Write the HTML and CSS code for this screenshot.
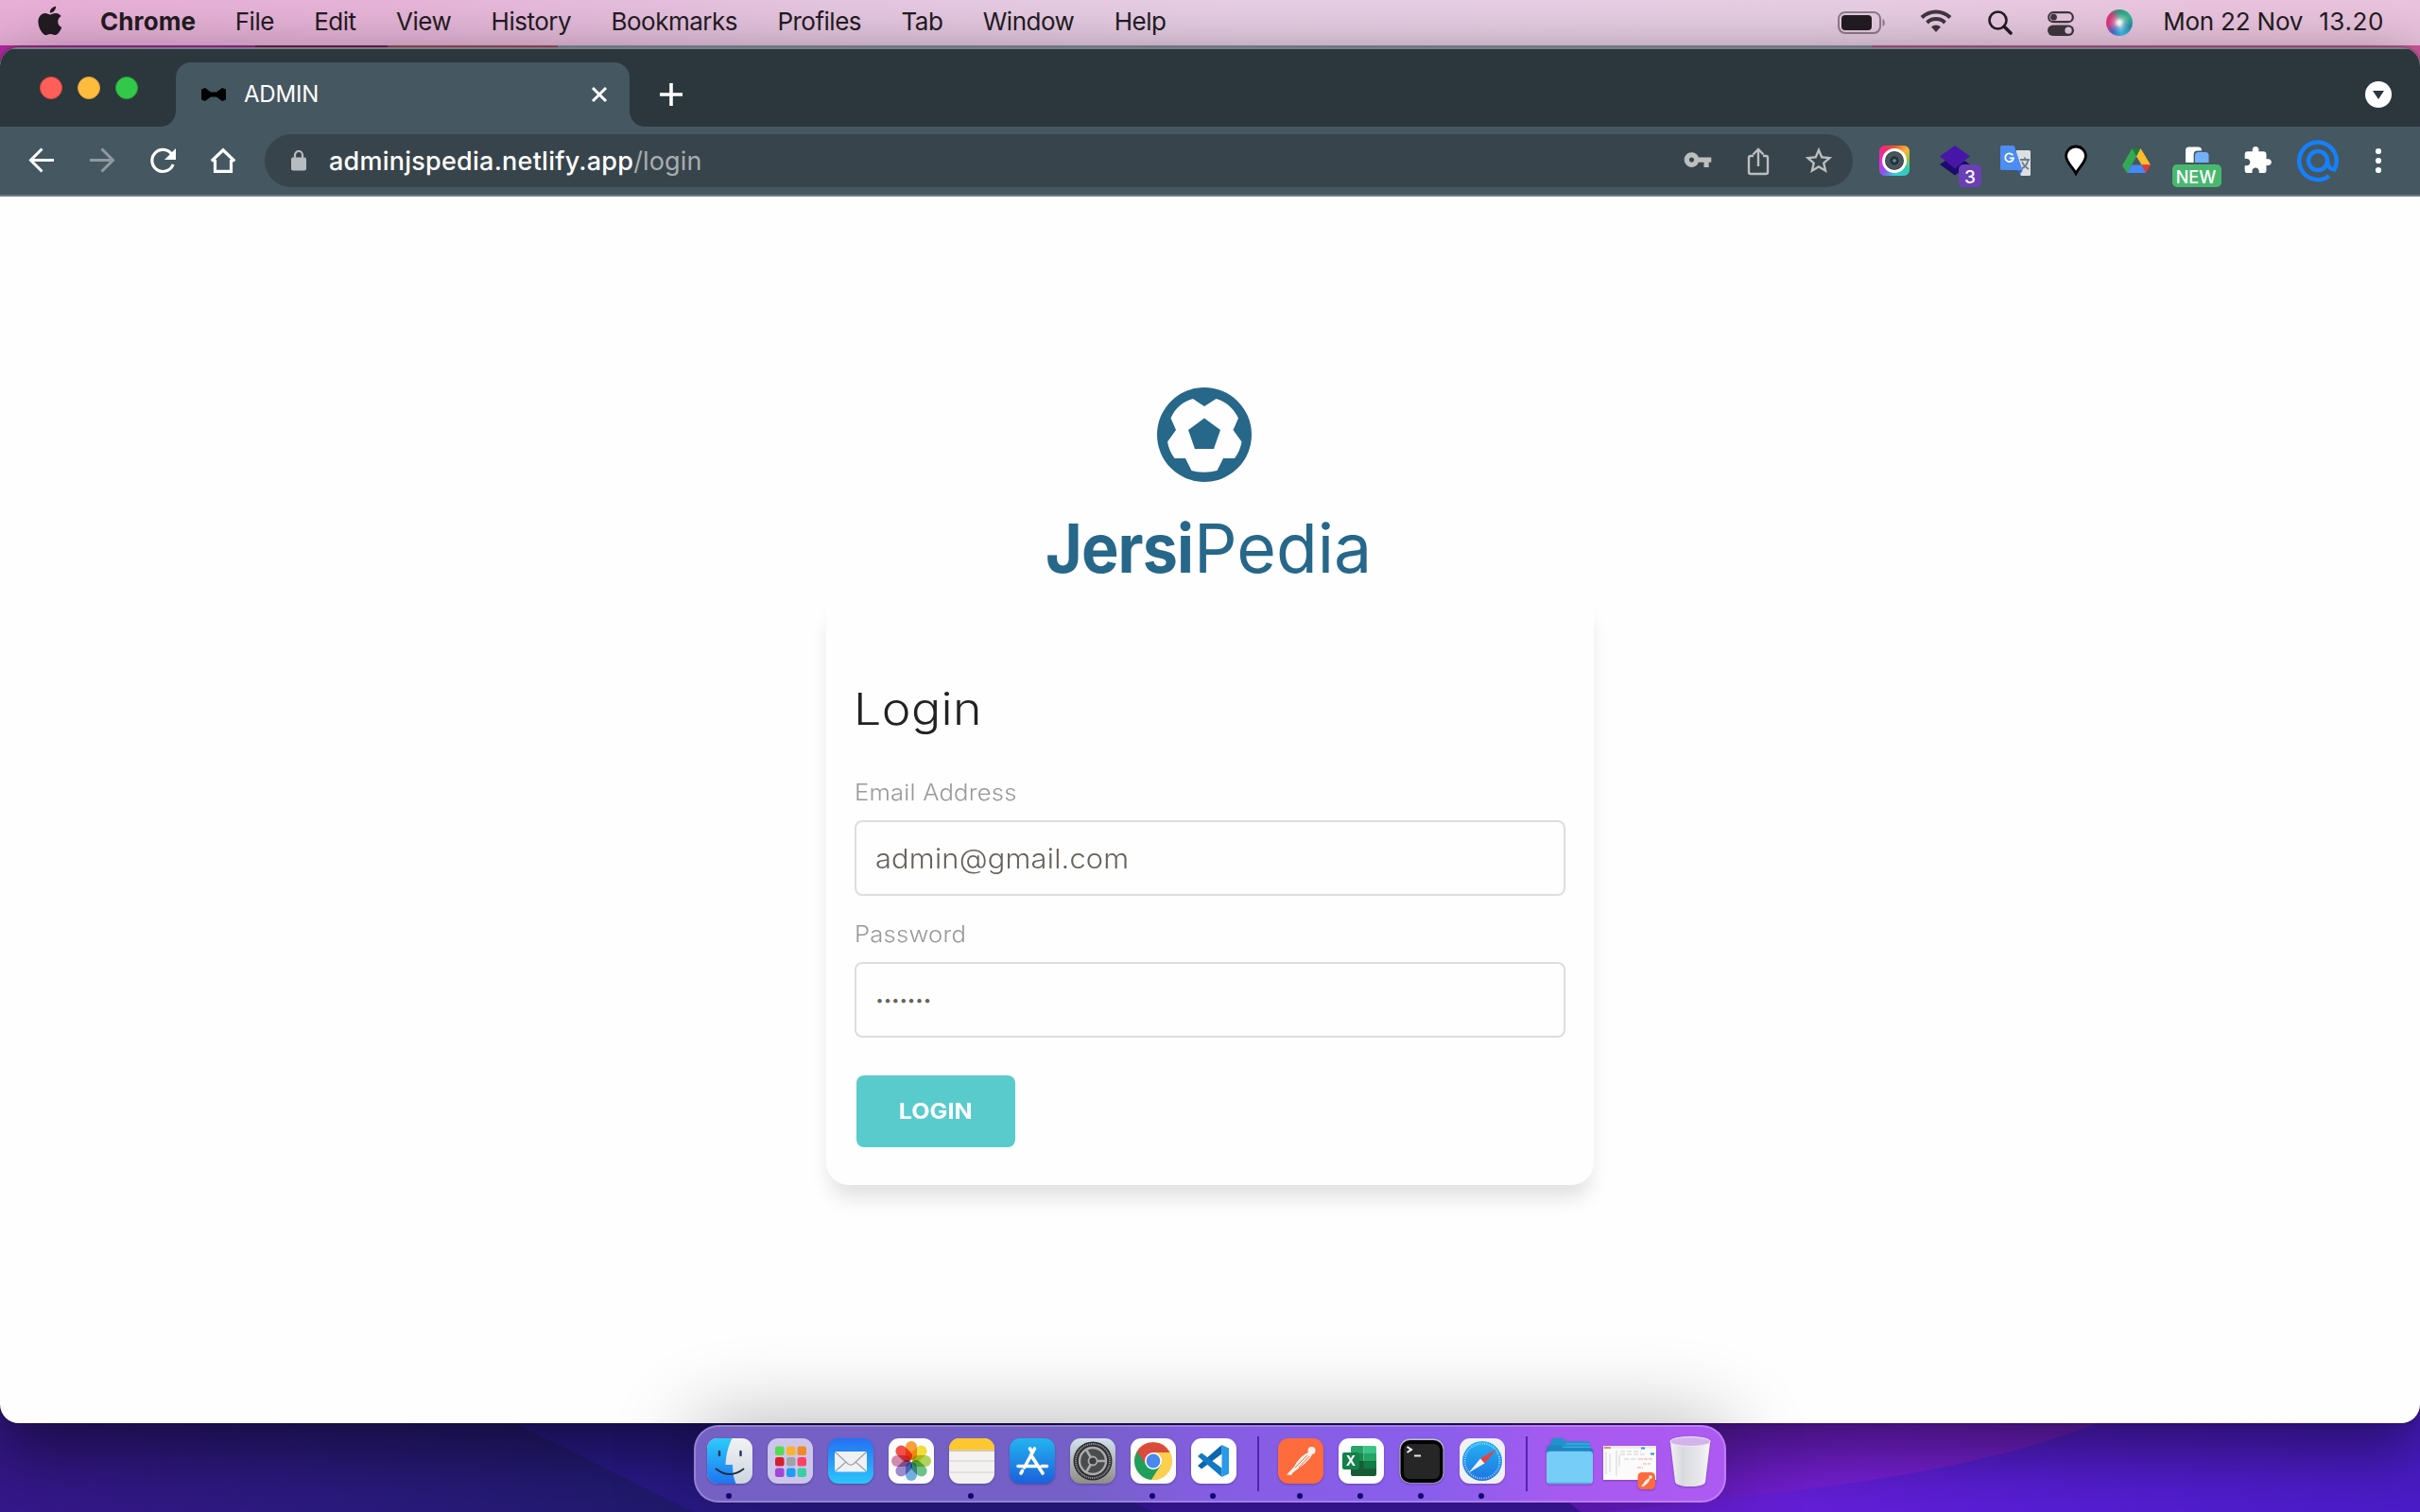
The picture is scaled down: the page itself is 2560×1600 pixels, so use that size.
FILE: index.html
```html
<!DOCTYPE html>
<html lang="en">
<head>
<meta charset="utf-8">
<title>ADMIN</title>
<link rel="stylesheet" href="styles.css">
</head>
<body>
<svg class="wallpaper" viewBox="0 0 2560 1600" aria-hidden="true">
  <defs>
    <linearGradient id="wBase" x1="0" x2="1"><stop offset="0" stop-color="#35178a"/><stop offset=".12" stop-color="#2c1a80"/><stop offset=".26" stop-color="#221a70"/></linearGradient>
    <linearGradient id="wMag" x1="0" x2="1"><stop offset="0" stop-color="#651bc4"/><stop offset=".4" stop-color="#7820d8"/><stop offset="1" stop-color="#6a1fb4"/></linearGradient>
    <linearGradient id="wBlue" x1="0" x2="1"><stop offset="0" stop-color="#7020dc"/><stop offset=".5" stop-color="#581ed6"/><stop offset="1" stop-color="#4a1cc8"/></linearGradient>
  </defs>
  <rect width="2560" height="1600" fill="url(#wBase)"/>
  <path d="M500 1484 L733 1600 H2560 V1484Z" fill="#2a1a8a"/>
  <path d="M1120 1550 L1220 1600 H2560 V1484 H1120Z" fill="#3c18a2"/>
  <path d="M1600 1540 L1672 1600 H2560 V1484 H1600Z" fill="url(#wMag)"/>
  <path d="M2270 1484 C2160 1536 2040 1562 1850 1583 L1700 1600 H2560 V1484Z" fill="url(#wBlue)"/>
  <rect width="1280" height="110" fill="#b92ba5"/>
  <rect x="270" width="140" height="60" fill="#84205f"/>
  <rect x="410" width="180" height="60" fill="#b85468"/>
  <rect x="590" width="1390" height="60" fill="#98a0b4"/>
  <rect x="1980" width="580" height="110" fill="#d35a9f"/>
</svg>

<header class="menubar">
  <svg class="apple" viewBox="0 0 26 32"><path d="M21.7 17c0-3 2.5-4.500 2.600-4.600-1.400-2.100-3.600-2.400-4.400-2.400-1.900-.2-3.600 1.100-4.600 1.100-.9 0-2.400-1.100-3.900-1.100-2 0-3.900 1.200-4.900 3-2.100 3.600-.5 9 1.500 12 1 1.400 2.200 3 3.700 3 1.500-.1 2.100-1 3.900-1s2.300 1 3.900.9c1.600 0 2.600-1.400 3.600-2.900 1.100-1.700 1.600-3.300 1.600-3.400 0 0-3-1.200-3-4.600zM18.700 8.100c.8-1 1.400-2.400 1.200-3.800-1.200.1-2.600.8-3.500 1.800-.8.900-1.400 2.300-1.200 3.600 1.300.1 2.700-.7 3.500-1.600z" transform="translate(-6.700 -4.900) scale(1.290)"/></svg>
  <nav class="menus">
    <span class="app">Chrome</span><span>File</span><span>Edit</span><span>View</span><span>History</span><span>Bookmarks</span><span>Profiles</span><span>Tab</span><span>Window</span><span>Help</span>
  </nav>
  <div class="status">
    <svg class="battery" viewBox="0 0 50 24"><rect x="1" y="1" width="44" height="22" rx="7" fill="none" stroke="#8f7d8d" stroke-width="2"/><rect x="4" y="4" width="32" height="16" rx="4"/><path d="M47.500 8v8c3-1 3-7 0-8z" fill="#8f7d8d"/></svg>
    <svg class="wifi" viewBox="0 0 34 26" fill="none" stroke="#40373f" stroke-width="4"><path d="M2 9.500a21.500 21.500 0 0 1 30 0"/><path d="M7.500 15a13.500 13.500 0 0 1 19 0"/><path d="M17 25l-5-5.500a7 7 0 0 1 10 0z" fill="#40373f" stroke="none"/></svg>
    <svg class="search" viewBox="0 0 26 26" fill="none" stroke="#231c22" stroke-width="2.600"><circle cx="10.500" cy="10.500" r="9"/><path d="M17 17l7 7" stroke-width="3.600" stroke-linecap="round"/></svg>
    <svg class="control" viewBox="0 0 28 26"><rect x="1.200" y="1.200" width="25.600" height="10" rx="5" fill="none" stroke="#40373f" stroke-width="2.200"/><circle cx="6.500" cy="6.200" r="3.400" fill="#40373f"/><rect y="14.500" width="28" height="11.500" rx="5.700" fill="#40373f"/><circle cx="22" cy="20.200" r="3.600" fill="#e9cbe2"/></svg>
    <span class="siri"></span>
    <span class="date">Mon 22 Nov</span><span class="clock">13.20</span>
  </div>
</header>

<main class="window">
  <div class="tabstrip">
    <div class="lights"><i class="close"></i><i class="min"></i><i class="max"></i></div>
    <div class="tab">
      <svg class="bow" viewBox="0 0 28 16"><path d="M1 2.500L5 1l6 4.500h6L23 1l4 1.500v11L23 15l-6-4.500h-6L5 15l-4-1.500z"/></svg>
      <span class="tab-title">ADMIN</span>
      <svg class="x" viewBox="0 0 18 18"><path d="M2 2l14 14M16 2L2 16" stroke="#fff" stroke-width="3"/></svg>
    </div>
    <svg class="plus" viewBox="0 0 24 24"><path d="M12 0v24M0 12h24" stroke="#fff" stroke-width="3.600"/></svg>
    <svg class="drop" viewBox="0 0 28 28"><circle cx="14" cy="14" r="14" fill="#fff"/><path d="M8 10h12l-6 9z" fill="#2c373d"/></svg>
  </div>

  <div class="toolbar">
    <svg class="cell" viewBox="0 0 64 64" fill="none" stroke="#fff" stroke-width="3"><path d="M45 31.500H21M32.500 19.500l-12 12 12 12"/></svg>
    <svg class="cell" viewBox="0 0 64 64" fill="none" stroke="#8f999f" stroke-width="3"><path d="M19 31.500h24M31.500 19.500l12 12-12 12"/></svg>
    <svg class="cell" viewBox="0 0 64 64"><path d="M41.500 25a11.500 11.500 0 1 0 1.600 11" fill="none" stroke="#fff" stroke-width="3.200"/><path d="M46 19v12H34z" fill="#fff"/></svg>
    <svg class="cell" viewBox="0 0 64 64"><path d="M19.800 32.500L32 20.800l12.200 11.700M23.500 31v12.300h17V31" fill="none" stroke="#fff" stroke-width="3.200"/></svg>
    <div class="omnibox">
      <svg class="lock" viewBox="0 0 16 22"><path d="M4 9V5a4 4 0 0 1 8 0v4" fill="none" stroke="#b6bcc0" stroke-width="2.200"/><rect y="7.500" width="16" height="14" rx="2" fill="#b6bcc0"/></svg>
      <div class="url"><span class="host">adminjspedia.netlify.app</span><span class="path">/login</span></div>
      <svg class="cell" viewBox="0 0 64 64" fill="#bcbebf"><path transform="translate(16.400 15.500) scale(1.300)" d="M12.650 10C11.830 7.670 9.610 6 7 6c-3.310 0-6 2.690-6 6s2.690 6 6 6c2.610 0 4.830-1.670 5.650-4H17v4h4v-4h2v-4H12.650zM7 14c-1.100 0-2-.9-2-2s.9-2 2-2 2 .9 2 2-.9 2-2 2z"/></svg>
      <svg class="cell" viewBox="0 0 64 64" fill="none" stroke="#bcbebf" stroke-width="2.400"><path d="M27 27h-3a2 2 0 0 0-2 2v15a2 2 0 0 0 2 2h16a2 2 0 0 0 2-2V29a2 2 0 0 0-2-2h-3M32 38V20.500M26.500 25.500L32 20l5.500 5.500"/></svg>
      <svg class="cell" viewBox="0 0 64 64" fill="#bcbebf"><path transform="translate(14.800 15) scale(1.430)" d="M22 9.240l-7.190-.62L12 2 9.190 8.630 2 9.240l5.460 4.730L5.820 21 12 17.270 18.180 21l-1.630-7.030L22 9.240zM12 15.400l-3.760 2.270 1-4.280-3.320-2.880 4.380-.38L12 6.100l1.710 4.040 4.380.38-3.320 2.880 1 4.280L12 15.400z"/></svg>
    </div>
    <div class="cell"><span class="lens"><i></i></span></div>
    <div class="cell">
      <svg viewBox="0 0 64 64"><path d="M16 36l6-4 10 8 10-8 6 4-16 11.500z" fill="#1d0a70"/><path d="M16 27.500L32 16l16 11.500L32 40z" fill="#4716a8"/></svg>
      <b class="badge three">3</b>
    </div>
    <svg class="cell" viewBox="0 0 64 64"><path d="M33 21h13.500q1.500 0 1.500 1.500v24q0 1.500-1.500 1.500H38l-5-10z" fill="#dcdfe1"/><path d="M37 31h10M42 28.500V31M45.500 31c-1 5-4 8-7 9.500M39 33c1.500 4 4 6 7 8" stroke="#6f7d86" stroke-width="1.800" fill="none"/><path d="M34 41.500h6l-3.500 6z" fill="#3a62c8"/><path d="M17.500 16H30l1 1 8.500 25H17.500q-1.500 0-1.500-1.500v-23q0-1.500 1.500-1.500z" fill="#4d8cf2"/><path d="M29.300 26.300a4.400 4.400 0 1 0 .7 3.100h-4.300" fill="none" stroke="#fff" stroke-width="1.800"/></svg>
    <svg class="cell" viewBox="0 0 64 64"><path d="M32 45.500c-3-6-10.400-12-10.400-18.500a10.400 10 0 0 1 20.800 0c0 6.500-7.400 12.500-10.400 18.500z" fill="#fff" stroke="#000" stroke-width="2.800"/></svg>
    <svg class="cell" viewBox="0 0 64 64"><path d="M27.500 19L17 37l5 8 10.500-18z" fill="#34a853"/><path d="M27.500 19h9L32 27.500z" fill="#188038"/><path d="M36.500 19L47 36.500H37.500L32 27.500z" fill="#fbbc2c"/><path d="M37.500 36.500H47l-5 8.500z" fill="#ea3535"/><path d="M27 36.500h10.500L42 45H22z" fill="#4688f4"/></svg>
    <div class="cell">
      <svg viewBox="0 0 64 64"><rect x="20" y="17.500" width="17" height="18" rx="3.500" fill="#fff"/><rect x="28.600" y="21.500" width="17" height="18" rx="4" fill="#455760"/><rect x="30" y="23" width="14.500" height="16" rx="3.500" fill="#74b0fa"/><rect x="16" y="34" width="32" height="8" fill="#455760"/></svg>
      <b class="badge new">NEW</b>
    </div>
    <svg class="cell" viewBox="0 0 64 64" fill="#fff"><path transform="translate(16 15.600) scale(1.340)" d="M20.500 11H19V7c0-1.100-.9-2-2-2h-4V3.500C13 2.120 11.880 1 10.500 1S8 2.120 8 3.500V5H4c-1.100 0-1.990.9-1.990 2v3.800H3.500c1.490 0 2.700 1.210 2.700 2.700s-1.210 2.700-2.700 2.700H2V20c0 1.100.9 2 2 2h3.800v-1.500c0-1.490 1.210-2.700 2.700-2.700 1.490 0 2.700 1.210 2.700 2.700V22H17c1.100 0 2-.9 2-2v-4h1.500c1.380 0 2.500-1.120 2.500-2.500S21.880 11 20.500 11z"/></svg>
    <svg class="cell" viewBox="0 0 64 64" fill="none" stroke="#1580fb" stroke-width="4.400"><circle cx="32" cy="32" r="10"/><path d="M43.800 48.200A19.800 19.800 0 1 1 51.800 32q0 5.500-2.600 9.500Q42 40 42 32"/></svg>
    <svg class="cell" viewBox="0 0 64 64" fill="#fff"><circle cx="32" cy="22" r="3.100"/><circle cx="32" cy="32" r="3.100"/><circle cx="32" cy="42" r="3.100"/></svg>
  </div>

  <section class="page">
    <svg class="ball" viewBox="0 0 100 100">
      <circle cx="50" cy="50" r="50" fill="#26678a"/>
      <path d="M38 12l12 8 12.500-8C73 15 81 22 86 32.500L80.500 45l9 12.500Q88 67 82 75H70l-6.500 13Q50 91.500 36.500 88L30 75H18.500Q12.500 67 11 57.500L20 45l-5.500-12.500C19 22 27 15 38 12z" fill="#fefefe"/>
      <path d="M50 32.500L67 45l-7 20H40l-7-20z" fill="#26678a"/>
    </svg>
    <div class="brand"><b>Jersi</b><span>Pedia</span></div>
    <form class="card">
      <h1>Login</h1>
      <label for="email">Email Address</label>
      <div class="field"><input id="email" type="text" value="admin@gmail.com"></div>
      <label for="pass">Password</label>
      <div class="field"><input id="pass" class="pass" type="text" value="•••••••"></div>
      <button type="button"><span>LOGIN</span></button>
    </form>
  </section>
</main>

<footer class="dock">
  <div class="slot running"><svg viewBox="0 0 48 48"><defs><linearGradient id="gF" x2="0" y2="1"><stop stop-color="#2ccbfa"/><stop offset="1" stop-color="#1e75f0"/></linearGradient><linearGradient id="gG" x2="0" y2="1"><stop stop-color="#f2f2f4"/><stop offset="1" stop-color="#ccd6e2"/></linearGradient></defs><rect width="48" height="48" rx="11" fill="url(#gG)"/><path d="M11 0h15.500C22 9 20 18 19.500 28H27c0 8 1 14 3.500 20H11A11 11 0 0 1 0 37V11A11 11 0 0 1 11 0z" fill="url(#gF)"/><path d="M13 14v4M35.500 14v4" stroke="#1d3b55" stroke-width="2.400" stroke-linecap="round"/><path d="M9.500 32.500q14.500 11 29 0" fill="none" stroke="#1d2a3a" stroke-width="1.800" stroke-linecap="round"/></svg></div>
  <div class="slot"><svg viewBox="0 0 48 48"><rect width="48" height="48" rx="11" fill="#cdc6ea"/><g><rect x="8" y="8.500" width="9.500" height="9.500" rx="2.500" fill="#52dc50"/><rect x="20" y="8.500" width="9.500" height="9.500" rx="2.500" fill="#f9b42e"/><rect x="31.500" y="8.500" width="9.500" height="9.500" rx="2.500" fill="#f08a24"/><rect x="8" y="20" width="9.500" height="9.500" rx="2.500" fill="#d3202c"/><rect x="20" y="20" width="9.500" height="9.500" rx="2.500" fill="#a0a2a8"/><rect x="31.500" y="20" width="9.500" height="9.500" rx="2.500" fill="#fb4265"/><rect x="8" y="31.500" width="9.500" height="9.500" rx="2.500" fill="#a146d6"/><rect x="20" y="31.500" width="9.500" height="9.500" rx="2.500" fill="#1f9cf4"/><rect x="31.500" y="31.500" width="9.500" height="9.500" rx="2.500" fill="#38cfa4"/></g></svg></div>
  <div class="slot"><svg viewBox="0 0 48 48"><defs><linearGradient id="gM" x2="0" y2="1"><stop stop-color="#2470f2"/><stop offset="1" stop-color="#2cc6fb"/></linearGradient></defs><rect width="48" height="48" rx="11" fill="url(#gM)"/><rect x="7" y="14" width="34" height="21.500" rx="2.500" fill="#f0f1f2"/><path d="M8 15l13 12q3 2.500 6 0l13-12M8 34.500l11-9.500M40 34.500L29 25" fill="none" stroke="#9da2a8" stroke-width="1.200"/></svg></div>
  <div class="slot"><svg viewBox="0 0 48 48"><rect width="48" height="48" rx="11" fill="#fdfcfd"/><g class="petals" transform="translate(24 24)"><rect x="-6" y="-21" width="12" height="20" rx="6" fill="#f9a13a"/><rect x="-6" y="-21" width="12" height="20" rx="6" fill="#f4de3a" transform="rotate(45)"/><rect x="-6" y="-21" width="12" height="20" rx="6" fill="#b2d65a" transform="rotate(90)"/><rect x="-6" y="-21" width="12" height="20" rx="6" fill="#70c488" transform="rotate(135)"/><rect x="-6" y="-21" width="12" height="20" rx="6" fill="#74b0e4" transform="rotate(180)"/><rect x="-6" y="-21" width="12" height="20" rx="6" fill="#9d8ccc" transform="rotate(225)"/><rect x="-6" y="-21" width="12" height="20" rx="6" fill="#d48cb0" transform="rotate(270)"/><rect x="-6" y="-21" width="12" height="20" rx="6" fill="#f4524a" transform="rotate(315)"/></g></svg></div>
  <div class="slot running"><svg viewBox="0 0 48 48"><rect width="48" height="48" rx="11" fill="#f3f2f0"/><path d="M0 12.500V11A11 11 0 0 1 11 0h26a11 11 0 0 1 11 11v1.500z" fill="#fdc72f"/><path d="M0 13.200h48" stroke="#b8b2a4" stroke-width="1"/><path d="M0 24h48M0 36h48" stroke="#d3d1cf" stroke-width="1"/></svg></div>
  <div class="slot"><svg viewBox="0 0 48 48"><defs><linearGradient id="gA" x2="0" y2="1"><stop stop-color="#22b4f0"/><stop offset="1" stop-color="#1c60dc"/></linearGradient></defs><rect width="48" height="48" rx="11" fill="url(#gA)"/><path d="M21.500 11l2.500 4M26.500 11L15.500 31M9 29.500h19M22.500 17.500L35 37M34 29.500h5.500M13.500 34.500l-1.500 2.500" fill="none" stroke="#fff" stroke-width="3.600" stroke-linecap="round"/></svg></div>
  <div class="slot"><svg viewBox="0 0 48 48"><defs><linearGradient id="gS" x2="0" y2="1"><stop stop-color="#d3e2ee"/><stop offset="1" stop-color="#8f8c88"/></linearGradient></defs><rect width="48" height="48" rx="11" fill="url(#gS)"/><circle cx="24" cy="24" r="20.500" fill="#2b2c2d"/><circle cx="24" cy="24" r="18" fill="none" stroke="#8d8f90" stroke-width="2" stroke-dasharray="1.200 .8"/><circle cx="24" cy="24" r="14" fill="#4a4c4d" stroke="#a9abac" stroke-width="2.400"/><path d="M24 24h14M24 24l-7-12M24 24l-7 12" stroke="#a9abac" stroke-width="2.600"/><circle cx="24" cy="24" r="4.500" fill="#3a3c3d" stroke="#a9abac" stroke-width="1.800"/></svg></div>
  <div class="slot running"><svg viewBox="0 0 48 48"><rect width="48" height="48" rx="11" fill="#fbfbfb"/><circle cx="24" cy="24" r="20" fill="#fccf4e"/><path d="M22 44l10.500-16-8.500-4-17.300-10-.1.200A20 20 0 0 0 22 44z" fill="#1f9f5b"/><path d="M6.700 14A20 20 0 0 1 41.500 15H24l-8.500 12z" fill="#db4a3f"/><path d="M41.300 15H24v9l8.500 3.500L22 44a20 20 0 0 0 19.300-29z" fill="#fccf4e"/><circle cx="24" cy="24" r="9" fill="#fff"/><circle cx="24" cy="24" r="7.400" fill="#4a88ee"/></svg></div>
  <div class="slot running"><svg viewBox="0 0 48 48"><rect width="48" height="48" rx="11" fill="#fefefe"/><path d="M32.500 7L40 10.500v27L32.500 41z" fill="#279bea"/><path d="M32.500 7v9.500L11 32.500l-4-3.500z" fill="#0a66ae"/><path d="M32.500 41v-9.500L11 15.500 7 19z" fill="#1379c4"/></svg></div>
  <i class="sep"></i>
  <div class="slot running"><svg viewBox="0 0 48 48"><rect width="48" height="48" rx="11" fill="#fe6b3d"/><circle cx="35.500" cy="13" r="4" fill="#fff1ea"/><path d="M32 15c-7 3-12 9-15 15l-8 8.500 5 .5 1.500-2.500L28 27c4-4 7-7 8-10z" fill="#fff1ea"/><path d="M31 18L18 31M33 19L22 31" stroke="#fe6b3d" stroke-width="1"/></svg></div>
  <div class="slot running"><svg viewBox="0 0 48 48"><rect width="48" height="48" rx="11" fill="#fefefe"/><path d="M13 10q0-2 2-2h11.500v8H13z" fill="#27a367"/><path d="M26.500 8H38q2 0 2 2v6H26.500z" fill="#3ac486"/><path d="M13 16h13.500v8H13z" fill="#1b8a50"/><path d="M26.500 16H40v8H26.500z" fill="#27a367"/><path d="M13 24h27v14q0 2-2 2H15q-2 0-2-2z" fill="#185c37"/><path d="M26.500 24H40v8H26.500z" fill="#127a45"/><rect x="4" y="15" width="18" height="18" rx="2" fill="#12814a"/><text x="13" y="29.200" text-anchor="middle" class="xl">X</text></svg></div>
  <div class="slot running"><svg viewBox="0 0 48 48"><rect x=".5" y=".5" width="47" height="47" rx="11" fill="#b9c3c6"/><rect x="1.500" y="2" width="45" height="45" rx="10" fill="#020202"/><rect x="5" y="6" width="38" height="37" rx="6" fill="#262626"/><path d="M8.500 9l4.500 3-4.500 3" fill="none" stroke="#f4f4f4" stroke-width="2"/><path d="M16 18.500h7" stroke="#e6e6e6" stroke-width="2"/></svg></div>
  <div class="slot running"><svg viewBox="0 0 48 48"><defs><linearGradient id="gB" x2="0" y2="1"><stop stop-color="#24b2f4"/><stop offset="1" stop-color="#1f74e2"/></linearGradient></defs><rect width="48" height="48" rx="11" fill="#f1f1f3"/><circle cx="24" cy="24" r="21" fill="url(#gB)"/><circle cx="24" cy="24" r="18.500" fill="none" stroke="#bfe2fa" stroke-width="2" stroke-dasharray=".8 1.600"/><path d="M39 11.500L22 21.500l4.500 5z" fill="#ef4038"/><path d="M9.500 36.500L22 21.500l4.500 5z" fill="#f1f2f4"/></svg></div>
  <i class="sep"></i>
  <div class="slot"><svg class="folder" viewBox="0 0 52 58" preserveAspectRatio="none"><path d="M6 5q0-4 4-4h8l4 4h22q4 0 4 4v16H2V14q0-4 4-4z" fill="#2392cc"/><path d="M1 14q0-4 4-4h12l4 3h26q4 0 4 4v10H1z" fill="#1c86c4"/><path d="M22 8h26M18 12h31" stroke="#46b4ea" stroke-width="1.200"/><rect x="1" y="17" width="50" height="40" rx="4" fill="#76cdf8"/><path d="M3 56h46" stroke="#58b4e6" stroke-width="1.600"/></svg></div>
  <div class="slot"><svg class="thumb" viewBox="0 0 58 46"><rect width="56" height="36" fill="#fbfbfb"/><path d="M0 1.500h56" stroke="#e8e8ea" stroke-width="2"/><path d="M1 2h7" stroke="#f08a60" stroke-width="2"/><path d="M3 6v24M7 8v20M14 5v27M17 10v12" stroke="#d4d4d6" stroke-width="1"/><path d="M18 6h22M18 9h28M22 14h16" stroke="#d0d0d2" stroke-width="1.200" stroke-dasharray="5 2"/><path d="M40 2.500h4M50 8.500h4" stroke="#2f86f6" stroke-width="2"/><path d="M38 14h14M42 19h8M36 23h6" stroke="#f6a0a0" stroke-width="1" stroke-dasharray="4 1"/><rect x="36.500" y="28" width="18.500" height="18" rx="4.500" fill="#fe6b3d"/><circle cx="50" cy="33" r="1.700" fill="#fff"/><path d="M49 34q-5 2-6.500 6l-2.500 3h2.500q6-4 7-8z" fill="#fff1ea"/></svg></div>
  <div class="slot"><svg class="trash" viewBox="0 0 44 54"><defs><linearGradient id="gT"><stop stop-color="#f2f1f6"/><stop offset=".3" stop-color="#d9dadf"/><stop offset=".75" stop-color="#e8e8ec"/><stop offset="1" stop-color="#f8f8fa"/></linearGradient></defs><path d="M.8 5L6 48q1 5 16 5t16-5L43.200 5z" fill="url(#gT)"/><ellipse cx="22" cy="5.500" rx="21.200" ry="5" fill="#d3b4ea" stroke="#f3ecf8" stroke-width="1"/></svg></div>
</footer>
</body>
</html>
```
FILE: styles.css
```css
* { box-sizing: border-box; }
body {
  margin: 0; width: 2560px; height: 1600px; overflow: hidden;
  display: flex; flex-direction: column;
  font-family: Inter, "Liberation Sans", sans-serif; background: #2a1a80;
  position: relative;
}
svg { display: block; flex: none; }
.wallpaper { position: absolute; left: 0; top: 0; width: 2560px; height: 1600px; z-index: -1; }

.menubar {
  height: 48px; flex: none; display: flex; align-items: center; padding: 0 38px 0 40px;
  background: linear-gradient(90deg, #e9b0d8 0, #e8b6da 17%, #e6c6e1 33%, #e8d0e6 52%, #e8cfe5 75%, #ecc5e0 92%, #ebc4df 100%);
  color: #231c22; font-size: 26px; line-height: 48px; white-space: nowrap;
}
.apple { width: 26px; height: 32px; margin-top: -4px; fill: #231c22; }
.menus { display: flex; gap: 42.4px; margin-left: 40px; letter-spacing: -.5px; margin-top: -2px; }
.menus .app { font-weight: 700; letter-spacing: .1px; margin-right: -.8px; }
.status { margin-left: auto; display: flex; align-items: center; fill: #231c22; }
.battery { width: 50px; height: 24px; }
.wifi { width: 34px; height: 26px; margin-left: 37px; margin-top: -4px; }
.search { width: 26px; height: 26px; margin-left: 38px; }
.control { width: 28px; height: 26px; margin-left: 37px; margin-top: 2px; }
.siri {
  width: 28px; height: 28px; border-radius: 50%; margin-left: 34px;
  background: radial-gradient(circle, #fff 0 8%, rgba(255,255,255,.3) 30%, transparent 55%),
    conic-gradient(#2f9d86, #36b98e 60deg, #2e8fae 110deg, #3fc0ea 170deg, #4a6fd0 215deg, #e23a86 260deg, #d23f78 310deg, #2f9d86);
}
.date { margin-left: 32px; margin-top: -2px; letter-spacing: -.2px; }
.clock { margin-left: 17px; margin-top: -2px; letter-spacing: .6px; }

.window {
  flex: none; height: 1456px; margin-top: 2px; border-radius: 20px; overflow: hidden;
  display: flex; flex-direction: column; background: #fefefe;
  box-shadow: 0 24px 70px 6px rgba(0,0,0,.5), 0 0 3px rgba(0,0,0,.5);
}
.tabstrip {
  height: 84px; flex: none; background: #2c373d; border-top: 2px solid #748087;
  display: flex; align-items: flex-start; padding: 14px 30px 0 42px;
}
.lights { display: flex; gap: 16px; padding-top: 15px; width: 144px; }
.lights i { width: 24px; height: 24px; border-radius: 50%; background: #fe5f58; border: 1px solid #e0453f; }
.lights .min { background: #febc3f; border-color: #e0a033; }
.lights .max { background: #33c84a; border-color: #24a838; }
.tab {
  width: 480px; height: 68px; background: #455760; border-radius: 16px 16px 0 0; position: relative;
  display: flex; align-items: center; padding: 0 23px 0 26px;
}
.tab::before, .tab::after { content: ""; position: absolute; bottom: 0; width: 16px; height: 16px; }
.tab::before { left: -16px; background: radial-gradient(circle at 0 0, transparent 15.500px, #455760 16.200px); }
.tab::after { right: -16px; background: radial-gradient(circle at 100% 0, transparent 15.500px, #455760 16.200px); }
.bow { width: 28px; height: 16px; }
.tab-title { color: #fff; font-size: 24px; margin-left: 18px; letter-spacing: -.2px; margin-top: -1px; }
.x { width: 18px; height: 18px; margin-left: auto; }
.plus { width: 24px; height: 24px; margin: 22px 0 0 32px; }
.drop { width: 28px; height: 28px; margin: 20px 0 0 auto; }

.toolbar {
  height: 74px; flex: none; background: #455760; border-bottom: 2px solid #6d7b82;
  display: flex; align-items: center; padding: 0 12px;
}
.cell { width: 64px; height: 64px; flex: none; position: relative; }
.omnibox {
  flex: 1; height: 56px; margin: 0 12px; border-radius: 28px; background: #38444b;
  display: flex; align-items: center; padding: 0 4px 0 28px;
}
.lock { width: 16px; height: 22px; }
.url { flex: 1; margin-left: 24px; font-size: 27px; }
.host { color: #fff; font-weight: 500; letter-spacing: .24px; }
.path { color: #a7adb1; letter-spacing: .15px; }
.lens {
  display: block; width: 32px; height: 32px; margin: 16px; border-radius: 6px; padding: 3px;
  background: conic-gradient(#f0552a, #f5b63c 50deg, #a8c43a 80deg, #35c9b0 120deg, #30d0d8 180deg, #8a52f0 225deg, #e82ad8 265deg, #f22b6e 320deg, #f0552a);
}
.lens i { display: block; width: 26px; height: 26px; border-radius: 50%; border: 3px solid #fff; background: radial-gradient(circle, #4f93ad 0 10%, #26333c 14% 30%, #4a545b 36% 60%, #353e45 66%); }
.badge {
  position: absolute; height: 24px; top: 36px; border-radius: 5px; color: #fff;
  font-size: 19px; font-weight: 500; line-height: 27px; text-align: center;
}
.three { left: 36px; width: 24px; background: #6b3fb5; }
.new { left: 6px; width: 52px; background: #49b86f; font-size: 18px; text-indent: -2px; }

.page { flex: 1; display: flex; flex-direction: column; align-items: center; padding-top: 202px; }
.ball { width: 100px; height: 100px; margin-left: -12px; }
.brand {
  width: 348px; height: 118px; padding-top: 25px; font-size: 71.500px; line-height: 90px;
  color: #26678a; display: flex;
}
.brand b { font-weight: 700; letter-spacing: -1px; width: 157px; transform: scaleX(.93); transform-origin: 0 0; }
.brand span { font-weight: 400; letter-spacing: 0; }
.card {
  width: 812px; height: 626px; padding: 94px 30px 40px; border-radius: 24px; background: #fefefe;
  display: flex; flex-direction: column; align-items: flex-start;
  box-shadow: 0 18px 22px -5px rgba(0,0,0,.12);
}
h1, label, .field input, button span { transform-origin: 0 50%; }
h1 { margin: 0 0 0 -1px; font-size: 46.500px; line-height: 56px; font-weight: 300; color: #222; letter-spacing: .4px; transform: scaleX(1.115); }
label { color: #999; font-size: 23.500px; line-height: 30px; font-weight: 300; letter-spacing: .2px; transform: scaleX(1.090); }
h1 + label { margin-top: 46px; }
.field {
  width: 752px; height: 80px; margin: 14px 0 26px; padding: 0 20px; border: 2px solid #ddd; border-radius: 8px;
  background: #fefefe; display: flex; align-items: center; overflow: hidden;
}
input {
  width: 640px; padding: 0; border: 0; background: none; outline: 0;
  font: 300 28.500px Inter, sans-serif; color: #66615b; letter-spacing: .2px;
}
.field input { transform: scaleX(1.080); }
.field .pass { font-size: 16px; letter-spacing: -.6px; transform: none; }
button {
  margin: 14px 0 0 2px; width: 168px; height: 76px; border: 0; border-radius: 8px; background: #59cbcd;
  color: #fff; font: 700 23px Inter, sans-serif; padding: 0;
}
button span { display: inline-block; transform: scaleX(1.090); transform-origin: 50% 50%; }

.dock {
  flex: none; align-self: center; width: 1092px; height: 82px; margin-top: 2px; padding: 0 4px;
  border: 2px solid rgba(255,255,255,.22); border-radius: 26px; position: relative; z-index: 1;
  display: flex; background: linear-gradient(90deg, #7560c4 0, #7560c8 38%, #855de2 50%, #8a5eec 72%, #a65af0 84%, #ae5af2 100%) border-box;
  box-shadow: 0 0 90px rgba(0,0,0,.32);
}
.slot { width: 64px; height: 78px; position: relative; padding: 12px 8px 0; }
.slot svg { width: 48px; height: 48px; filter: drop-shadow(0 1px 1px rgba(0,0,0,.25)); }
.slot.running::after {
  content: ""; position: absolute; left: 28px; top: 70px; width: 6px; height: 6px; border-radius: 50%; background: #12006e;
}
.petals rect { mix-blend-mode: multiply; }
.slot .folder { width: 51px; height: 50px; margin: -1px 0 0 -1px; }
.slot .thumb { width: 58px; height: 46px; margin: 8px 0 0 -4px; }
.slot .trash { width: 44px; height: 54px; margin: -2px 0 0 2px; }
.sep { width: 28px; flex: none; background: linear-gradient(#5422b4, #5422b4) 14px 10px / 2px 58px no-repeat; }
.xl { font: 700 14px Inter, sans-serif; fill: #fff; }
```
